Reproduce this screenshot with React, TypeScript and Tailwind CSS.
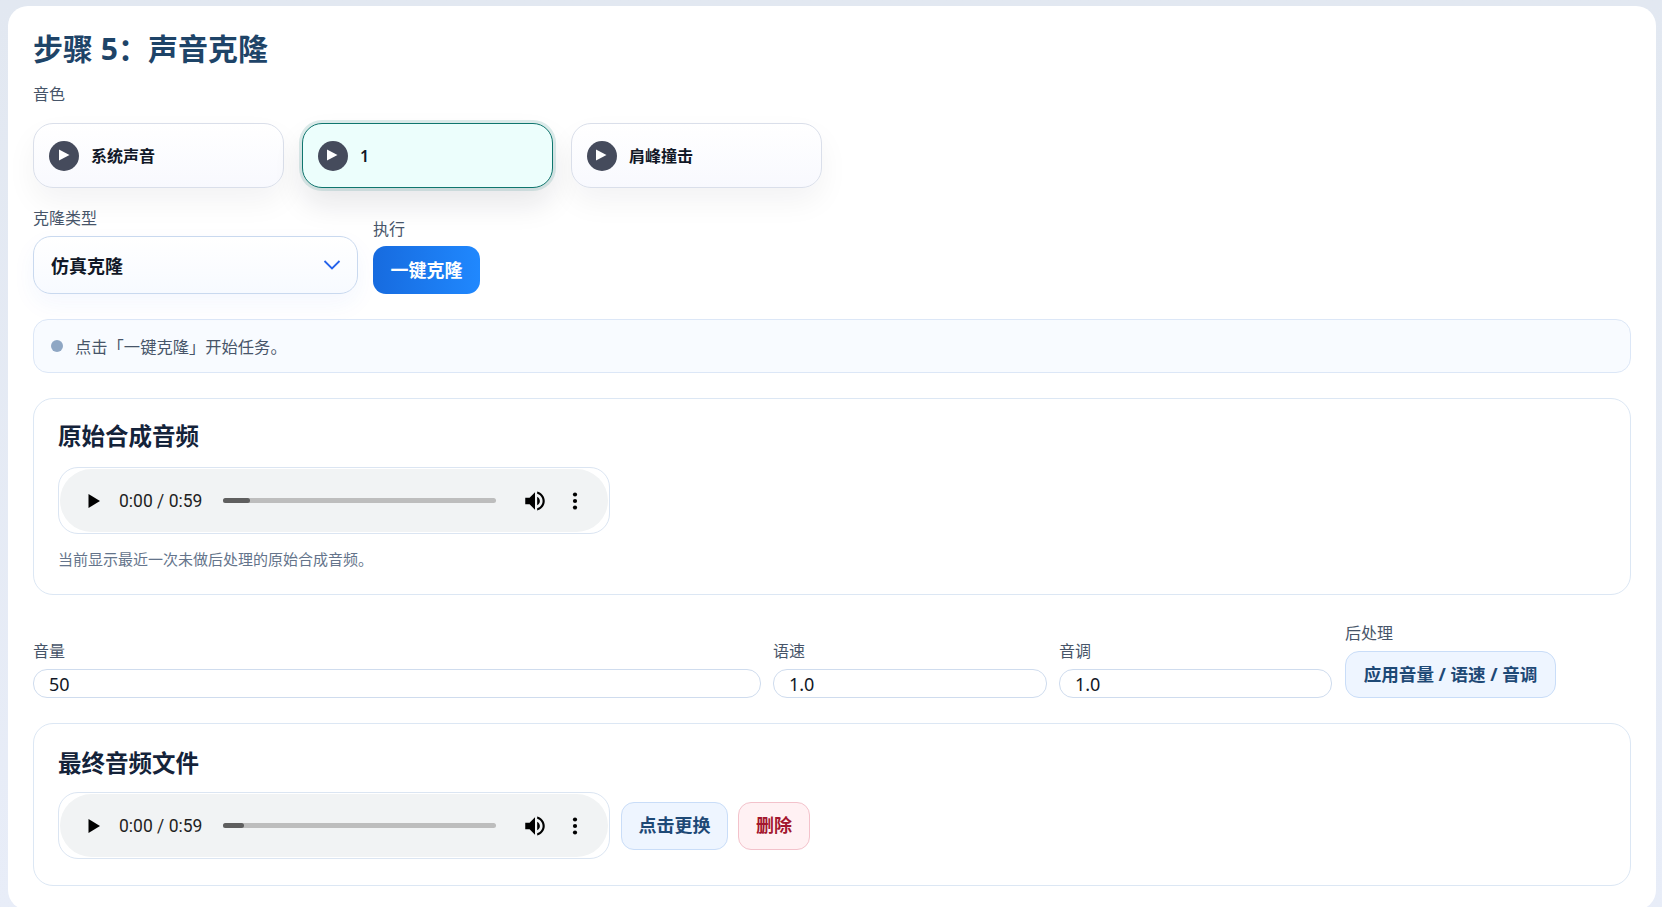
const fontStack = { fontFamily: '"Noto Sans", "Noto Sans CJK SC", sans-serif' };

function PlayBadge() {
  return (
    <span className="flex size-[30px] shrink-0 items-center justify-center rounded-full bg-[#454b5c]">
      <svg width="12" height="12" viewBox="0 0 12 12" className="mb-[2px] mr-[1px]">
        <path d="M1 0.5 L11.5 6 L1 11.5 Z" fill="#ffffff" />
      </svg>
    </span>
  );
}

function VoiceCard({ name, active }: { name: string; active?: boolean }) {
  return (
    <button
      className={
        active
          ? "flex h-[65px] w-[251.4px] items-center gap-[12px] rounded-[20px] border border-[#0f766e] bg-[#ecfefc] pl-[15px] text-left text-[16px] font-semibold text-[#111827] shadow-[0_0_0_3px_rgba(15,118,110,0.14),0_16px_30px_rgba(15,23,42,0.1)]"
          : "flex h-[65px] w-[251.4px] items-center gap-[12px] rounded-[20px] border border-[#dadfea] bg-gradient-to-b from-white to-[#f8f9fe] pl-[15px] text-left text-[16px] font-semibold text-[#111827] shadow-[0_14px_30px_rgba(15,23,42,0.05)]"
      }
    >
      <PlayBadge />
      <span>{name}</span>
    </button>
  );
}

function AudioBar({ progress }: { progress: number }) {
  return (
    <div className="h-[67px] w-[552px] shrink-0 rounded-[20px] border border-[#dbe5f2] bg-white p-[1px]">
      <div className="flex h-full items-center rounded-full bg-[#f1f3f4] pl-[27px] pr-[25px]">
        <svg width="14" height="16" viewBox="0 0 14 16" className="shrink-0">
          <path d="M1.5 1 L13 8 L1.5 15 Z" fill="#000000" />
        </svg>
        <span className="ml-[18px] w-[90px] shrink-0 whitespace-nowrap pt-[2px] font-[family-name:Roboto] text-[17.5px] text-[#1f1f1f]">
          0:00 / 0:59
        </span>
        <div className="ml-[14px] h-[5px] w-[273px] shrink-0 rounded-full bg-[#bdbdbd]">
          <div className="h-full rounded-full bg-[#5f5f5f]" style={{ width: progress }} />
        </div>
        <svg width="26" height="26" viewBox="0 0 24 24" className="ml-[26px] shrink-0">
          <path
            d="M3 9v6h4l5 5V4L7 9H3zm13.5 3c0-1.77-1.02-3.29-2.5-4.03v8.05c1.48-.73 2.5-2.25 2.5-4.02zM14 3.23v2.06c2.89.86 5 3.54 5 6.71s-2.11 5.85-5 6.71v2.06c4.01-.91 7-4.49 7-8.77s-2.99-7.86-7-8.77z"
            fill="#000000"
          />
        </svg>
        <svg width="6" height="18" viewBox="0 0 6 18" className="ml-[24px] shrink-0">
          <circle cx="3" cy="2.5" r="2.1" fill="#000000" />
          <circle cx="3" cy="9" r="2.1" fill="#000000" />
          <circle cx="3" cy="15.5" r="2.1" fill="#000000" />
        </svg>
      </div>
    </div>
  );
}

function NumField({ label, value }: { label: string; value: string }) {
  return (
    <div>
      <label className="mb-[6px] block text-[16px] leading-[24px] text-[#475569]">{label}</label>
      <div className="flex h-[29px] items-center rounded-[14px] border border-[#cfdcee] bg-white pl-[15px] pt-[1px] text-[18px] text-[#111827]">
        {value}
      </div>
    </div>
  );
}

export default function App() {
  return (
    <div
      className="h-[907px] overflow-hidden bg-gradient-to-b from-[#e2e8f1] to-[#e8edf8] pl-[8px] pr-[6px] pt-[6px]"
      style={fontStack}
    >
      <div className="h-[904px] rounded-[20px] bg-white pl-[25px] pr-[25px] pt-[23px]">
        <h2 className="text-[30px] font-bold leading-[40px] text-[#1e4468]">步骤 5：声音克隆</h2>

        <label className="mt-[13px] block text-[16px] leading-[24px] text-[#475569]">音色</label>
        <div className="mt-[17px] flex gap-[17.6px]">
          <VoiceCard name="系统声音" />
          <VoiceCard name="1" active />
          <VoiceCard name="肩峰撞击" />
        </div>

        <div className="mt-[18px] flex items-end gap-[15px]">
          <div>
            <label className="block text-[16px] leading-[24px] text-[#475569]">克隆类型</label>
            <div className="mt-[6px] flex h-[58px] w-[325px] items-center justify-between rounded-[18px] border border-[#c9d9ef] bg-gradient-to-b from-white to-[#f7faff] pl-[17px] pr-[16px] text-[18px] font-bold text-[#111827] shadow-[0_10px_24px_rgba(37,99,235,0.05)]">
              <span className="pt-[3px]">仿真克隆</span>
              <svg width="18" height="18" viewBox="0 0 18 18" fill="none">
                <path d="M1.5 5 L9 12.5 L16.5 5" stroke="#2563eb" strokeWidth="1.8" />
              </svg>
            </div>
          </div>
          <div>
            <label className="block text-[16px] leading-[24px] text-[#475569]">执行</label>
            <button className="mt-[5px] h-[48px] w-[107px] rounded-[13px] bg-gradient-to-r from-[#176bdf] to-[#2088fe] text-[18px] font-bold text-white">
              一键克隆
            </button>
          </div>
        </div>

        <div className="mt-[25px] flex h-[54px] items-center gap-[12px] rounded-[15px] border border-[#dce7f7] bg-[#f8fbff] pl-[17px] text-[16.3px] text-[#475569]">
          <span className="size-[12px] rounded-full bg-[#8fa7c4]" />
          <span className="pt-[2px]">点击「一键克隆」开始任务。</span>
        </div>

        <section className="mt-[25px] h-[197px] rounded-[20px] border border-[#dce7f4] pl-[24px] pt-[21px]">
          <h3 className="text-[23.5px] font-bold leading-[32px] text-[#14233a]">原始合成音频</h3>
          <div className="mt-[15px]">
            <AudioBar progress={27} />
          </div>
          <p className="mt-[15px] text-[15px] leading-[20px] text-[#64748b]">当前显示最近一次未做后处理的原始合成音频。</p>
        </section>

        <div className="mt-[26px] grid grid-cols-[728px_274px_273px_1fr] items-end gap-[12px]">
          <NumField label="音量" value="50" />
          <NumField label="语速" value="1.0" />
          <NumField label="音调" value="1.0" />
          <div className="pl-[1px]">
            <label className="mb-[6px] block text-[16px] leading-[24px] text-[#475569]">后处理</label>
            <button className="h-[47px] w-[211px] rounded-[14px] border border-[#c9ddf8] bg-[#eef5ff] text-[17.6px] font-bold text-[#1e4976]">
              应用音量 / 语速 / 音调
            </button>
          </div>
        </div>

        <section className="mt-[25px] h-[163px] rounded-[20px] border border-[#dce7f4] pl-[24px] pt-[23px]">
          <h3 className="text-[23.5px] font-bold leading-[32px] text-[#14233a]">最终音频文件</h3>
          <div className="mt-[13px] flex items-center gap-[10px]">
            <AudioBar progress={21} />
            <button className="ml-[1px] h-[48px] w-[107px] rounded-[13px] border border-[#c9ddf8] bg-[#eef5ff] text-[18px] font-bold text-[#1e4976]">
              点击更换
            </button>
            <button className="h-[48px] w-[72px] rounded-[13px] border border-[#f3c2cb] bg-[#fff1f3] text-[18px] font-bold text-[#a3162e]">
              删除
            </button>
          </div>
        </section>
      </div>
    </div>
  );
}
